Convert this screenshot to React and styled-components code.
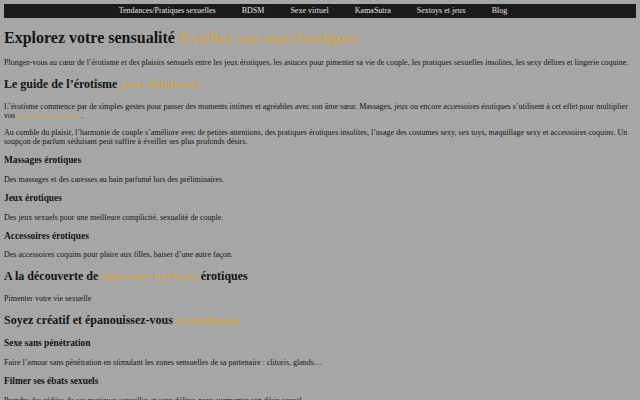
import styled, { createGlobalStyle } from "styled-components";

const GlobalStyle = createGlobalStyle`
  html, body {
    background: #a6a6a6;
  }
  body {
    margin: 4px;
    font-family: "Liberation Serif", "Times New Roman", serif;
    font-size: 8px;
    color: #151515;
  }
`;

const gold = "#c9a458";

const navItems = [
  "Tendances/Pratiques sexuelles",
  "BDSM",
  "Sexe virtuel",
  "KamaSutra",
  "Sextoys et jeux",
  "Blog",
];

const App = () => {
  return (
    <>
      <GlobalStyle />
      <NavBar>
        <NavList>
          {navItems.map((item) => (
            <NavItem key={item}>{item}</NavItem>
          ))}
        </NavList>
      </NavBar>
      <Title>
        Explorez votre sensualité <Accent>Éveillez vos sens érotiques</Accent>
      </Title>
      <Text>
        Plongez-vous au cœur de l’érotisme et des plaisirs sensuels entre les
        jeux érotiques, les astuces pour pimenter sa vie de couple, les
        pratiques sexuelles insolites, les sexy délires et lingerie coquine.
      </Text>
      <SectionTitle>
        Le guide de l’érotisme <Accent>pour débutants</Accent>
      </SectionTitle>
      <Text>
        L’érotisme commence par de simples gestes pour passer des moments
        intimes et agréables avec son âme sœur. Massages, jeux ou encore
        accessoires érotiques s’utilisent à cet effet pour multiplier vos{" "}
        <Accent>sensations érotiques</Accent>.
      </Text>
      <Text>
        Au comble du plaisir, l’harmonie de couple s’améliore avec de petites
        attentions, des pratiques érotiques insolites, l’usage des costumes
        sexy, sex toys, maquillage sexy et accessoires coquins. Un soupçon de
        parfum séduisant peut suffire à éveiller ses plus profonds désirs.
      </Text>
      <SubTitle>Massages érotiques</SubTitle>
      <Text>
        Des massages et des caresses au bain parfumé lors des préliminaires.
      </Text>
      <SubTitle>Jeux érotiques</SubTitle>
      <Text>
        Des jeux sexuels pour une meilleure complicité, sexualité de couple.
      </Text>
      <SubTitle>Accessoires érotiques</SubTitle>
      <Text>Des accessoires coquins pour plaire aux filles, baiser d’une autre façon.</Text>
      <SectionTitle>
        A la découverte de <Accent>nouveaux horizons</Accent> érotiques
      </SectionTitle>
      <Text>Pimenter votre vie sexuelle</Text>
      <SectionTitle>
        Soyez créatif et épanouissez-vous <Accent>sexuellement</Accent>
      </SectionTitle>
      <SubTitle>Sexe sans pénétration</SubTitle>
      <Text>
        Faire l’amour sans pénétration en stimulant les zones sensuelles de sa
        partenaire : clitoris, glands…
      </Text>
      <SubTitle>Filmer ses ébats sexuels</SubTitle>
      <Text>
        Prendre des vidéos de ses pratiques sexuelles et sexy délires pour
        augmenter son désir sexuel.
      </Text>
    </>
  );
};

const NavBar = styled.nav`
  background: #1b1b1b;
`;

const NavList = styled.ul`
  display: flex;
  justify-content: center;
  margin: 0;
  padding: 2px 14px 2px 0;
  list-style: none;
`;

const NavItem = styled.li`
  padding: 0 13px;
  color: #e4e4e4;
  font-size: 8px;
  line-height: 10px;
`;

const Title = styled.h1`
  font-size: 16px;
  margin: 11px 0;
`;

const SectionTitle = styled.h2`
  font-size: 12px;
  margin: 10px 0;
`;

const SubTitle = styled.h3`
  font-size: 9.4px;
  margin: 9.4px 0;
`;

const Text = styled.p`
  margin: 8px 0;
`;

const Accent = styled.span`
  color: ${gold};
`;

export default App;
